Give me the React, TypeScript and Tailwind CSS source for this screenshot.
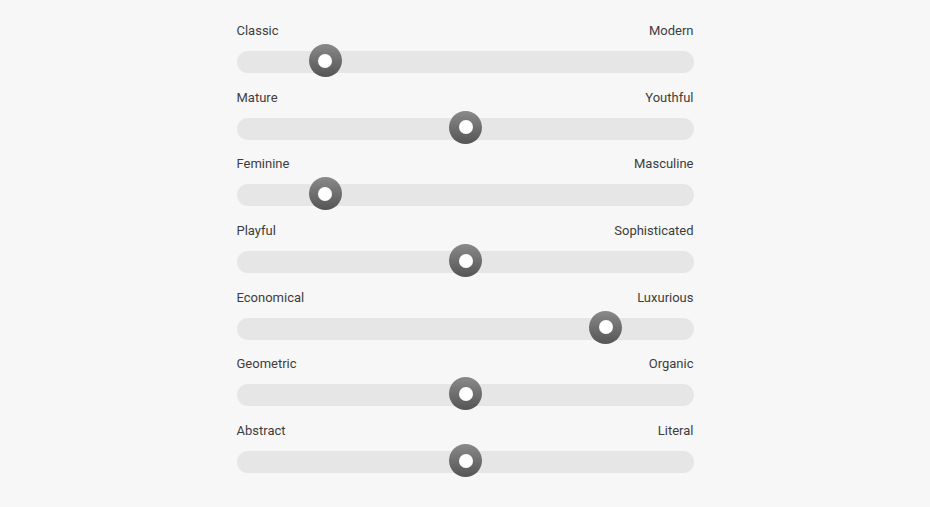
import React from "react";

const rows: { l: string; r: string; v: number }[] = [
  { l: "Classic", r: "Modern", v: -1 },
  { l: "Mature", r: "Youthful", v: 0 },
  { l: "Feminine", r: "Masculine", v: -1 },
  { l: "Playful", r: "Sophisticated", v: 0 },
  { l: "Economical", r: "Luxurious", v: 1 },
  { l: "Geometric", r: "Organic", v: 0 },
  { l: "Abstract", r: "Literal", v: 0 },
];

function Row({ l, r, v }: { l: string; r: string; v: number }) {
  const center = 228.5 + v * 140.3;
  return (
    <div className="flex flex-col gap-[10px]">
      <div className="flex justify-between pt-[1px] text-[13px] leading-[20px] text-[#3d3d3d]">
        <span>{l}</span>
        <span>{r}</span>
      </div>
      <div className="relative h-[22px] rounded-full bg-[#e6e6e6]">
        <div
          className="absolute top-[-7px] flex h-[33px] w-[33px] items-center justify-center rounded-full bg-gradient-to-b from-[#8a8a8a] to-[#555]"
          style={{ left: center - 16 }}
        >
          <div className="h-[14px] w-[14px] rounded-full bg-white" />
        </div>
      </div>
    </div>
  );
}

export default function App() {
  return (
    <div
      className="flex min-h-[507px] w-full justify-center bg-[#f7f7f7] pt-[20px]"
      style={{ fontFamily: "Roboto, 'Liberation Sans', sans-serif" }}
    >
      <div className="flex w-[457px] flex-col gap-[13.7px]">
        {rows.map((row) => (
          <Row key={row.l} {...row} />
        ))}
      </div>
    </div>
  );
}
